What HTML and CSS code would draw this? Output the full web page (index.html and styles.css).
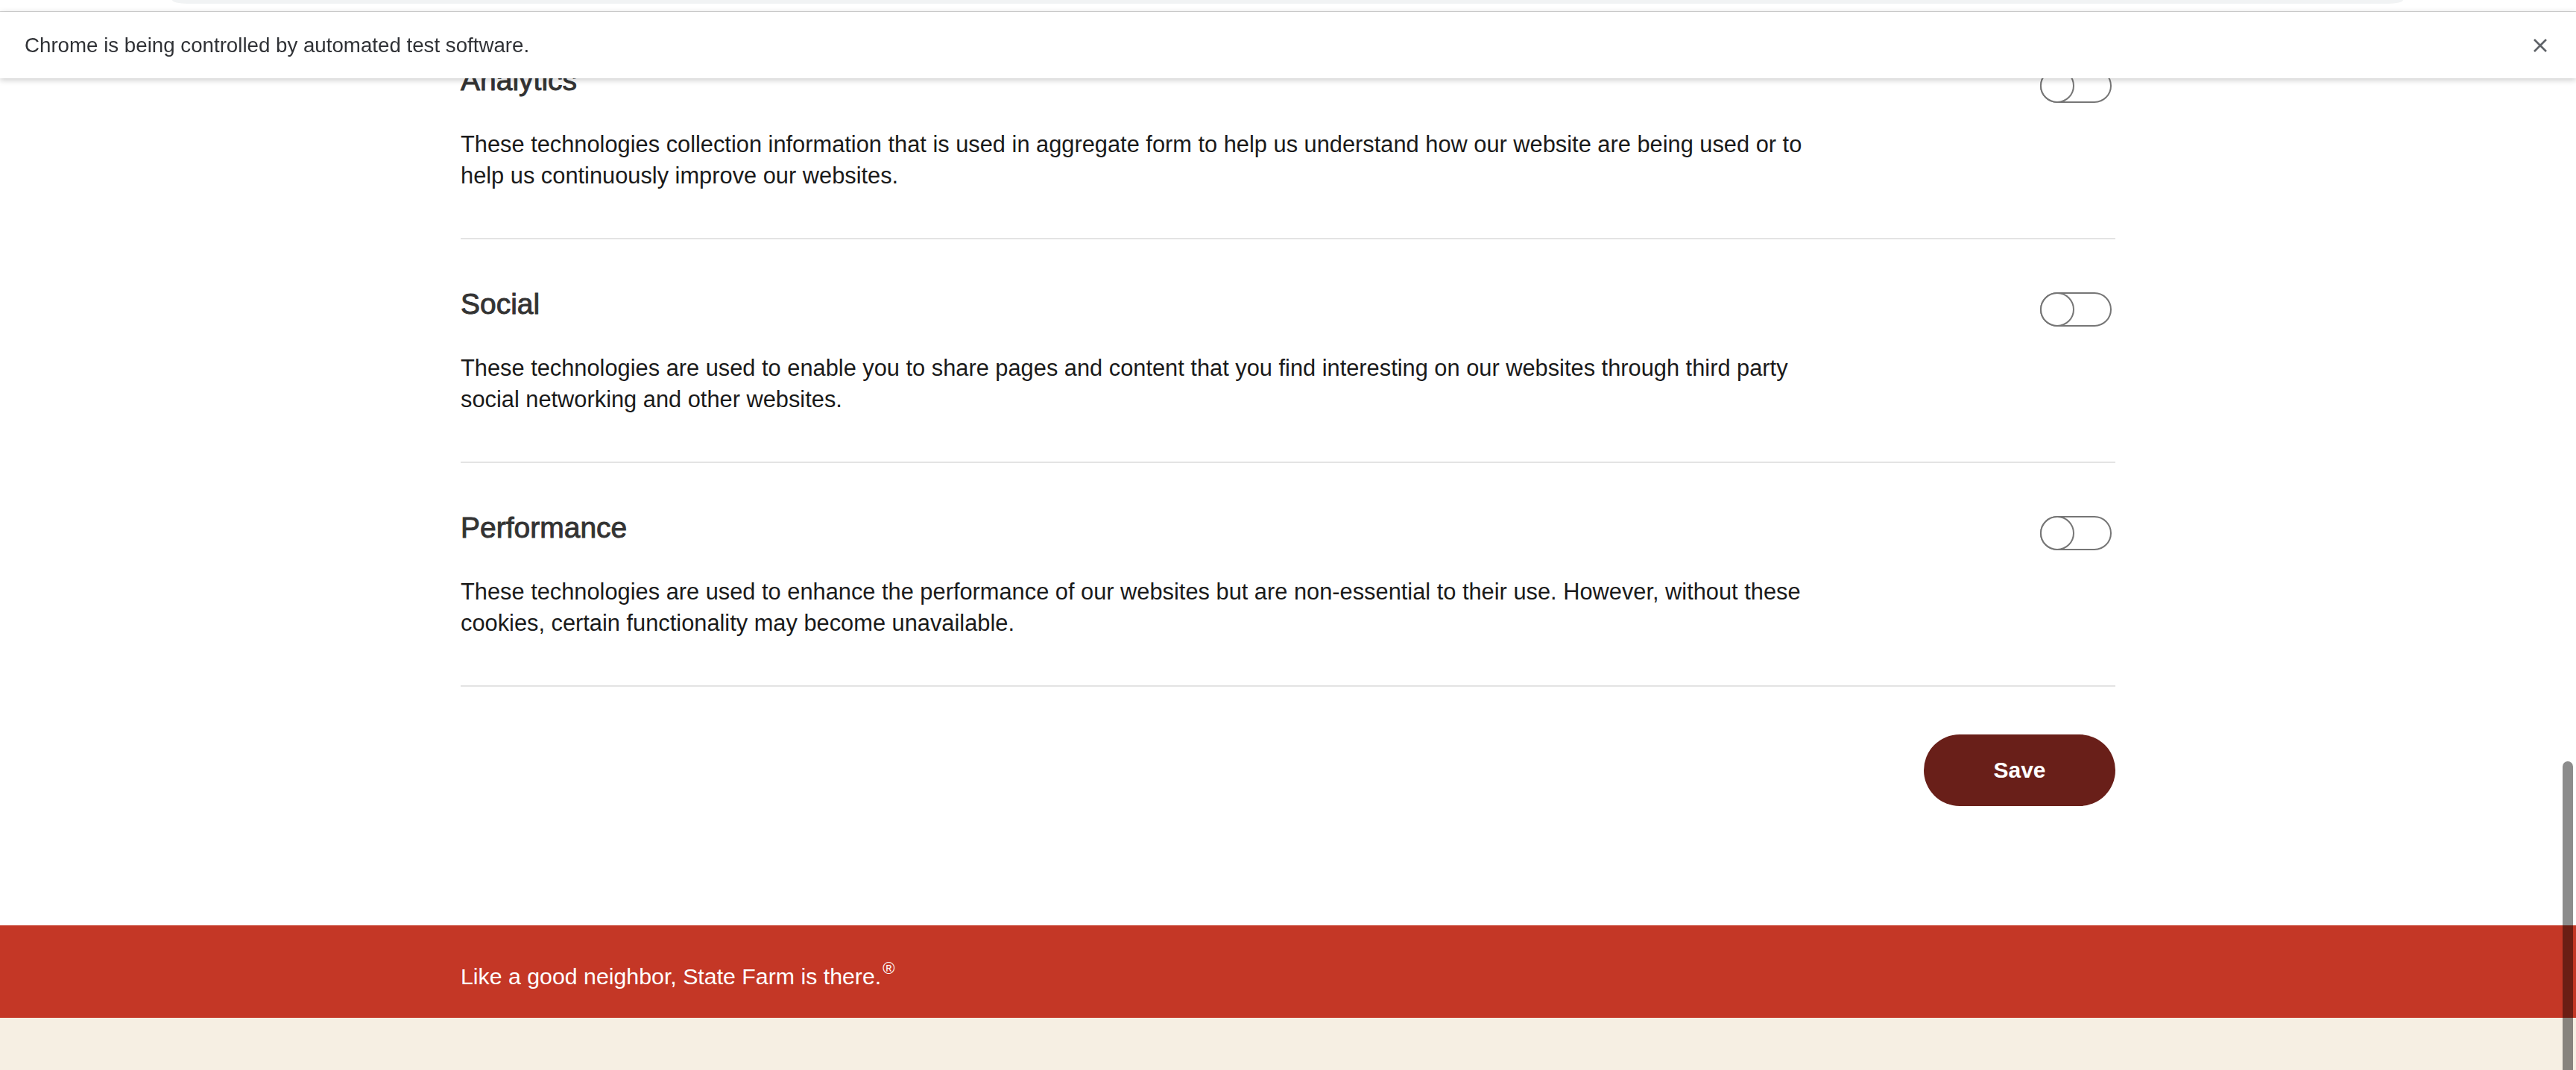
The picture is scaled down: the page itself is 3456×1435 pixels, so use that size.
FILE: index.html
```html
<!DOCTYPE html>
<html lang="en">
<head>
<meta charset="utf-8">
<title>Cookie preferences</title>
<link rel="stylesheet" href="styles.css">
</head>
<body>
<div class="chrome">
  <div class="toolbar"><div class="omnibox"></div></div>
  <div class="infobar">
    <span class="infobar-text">Chrome is being controlled by automated test software.</span>
    <span class="infobar-close" aria-label="Close">
      <svg width="20" height="20" viewBox="0 0 20 20"><path d="M2 2 L18 18 M18 2 L2 18" stroke="#5f6368" stroke-width="2.6" fill="none" stroke-linecap="butt"/></svg>
    </span>
  </div>
</div>

<main class="prefs">
  <section class="pref">
    <div class="pref-head">
      <h3 class="pref-title">Analytics</h3>
      <span class="toggle"><span class="knob"></span></span>
    </div>
    <p class="pref-text">These technologies collection information that is used in aggregate form to help us understand how our website are being used or to help us continuously improve our websites.</p>
  </section>
  <section class="pref">
    <div class="pref-head">
      <h3 class="pref-title">Social</h3>
      <span class="toggle"><span class="knob"></span></span>
    </div>
    <p class="pref-text">These technologies are used to enable you to share pages and content that you find interesting on our websites through third party social networking and other websites.</p>
  </section>
  <section class="pref">
    <div class="pref-head">
      <h3 class="pref-title">Performance</h3>
      <span class="toggle"><span class="knob"></span></span>
    </div>
    <p class="pref-text">These technologies are used to enhance the performance of our websites but are non-essential to their use. However, without these cookies, certain functionality may become unavailable.</p>
  </section>
  <div class="actions">
    <button class="save-btn" type="button">Save</button>
  </div>
</main>

<footer class="tagline-band">
  <div class="tagline-inner">Like a good neighbor, State Farm is there.<sup class="reg">®</sup></div>
</footer>
<div class="cream"></div>

<div class="scroll-thumb"></div>
</body>
</html>
```

FILE: styles.css
```css
html, body {
  margin: 0;
  padding: 0;
}
body {
  height: 1435px;
  overflow: hidden;
  background: #ffffff;
  font-family: "Liberation Sans", Arial, sans-serif;
}

/* Chrome UI overlay */
.chrome {
  position: fixed;
  top: 0;
  left: 0;
  right: 0;
  z-index: 10;
}
.toolbar {
  height: 15px;
  background: #ffffff;
  border-bottom: 1px solid #d6d6d6;
}
.omnibox {
  margin-left: 231px;
  width: 2993px;
  height: 5px;
  background: #f1f3f4;
  border-radius: 0 0 20px 20px / 0 0 5px 5px;
}
.infobar {
  height: 89px;
  background: #ffffff;
  display: flex;
  align-items: center;
  justify-content: space-between;
  padding: 0 38px 0 33px;
  box-shadow: 0 2px 8px rgba(0, 0, 0, 0.22);
}
.infobar-text {
  font-family: "Liberation Sans", Arial, sans-serif;
  font-size: 27.7px;
  color: #303236;
}
.infobar-close {
  display: flex;
  width: 20px;
  height: 20px;
}

/* Preferences */
.prefs {
  width: 2220px;
  margin: 0 auto;
  padding-top: 21px;
}
.pref {
  padding: 63px 0 62px;
  border-bottom: 2px solid #e3e3e3;
}
.pref-head {
  display: flex;
  justify-content: space-between;
  align-items: flex-start;
  height: 48px;
}
.pref-title {
  margin: 0;
  font-size: 39px;
  line-height: 48px;
  font-weight: 400;
  color: #333333;
  -webkit-text-stroke: 0.9px #333333;
}
.toggle {
  display: flex;
  box-sizing: border-box;
  width: 96px;
  height: 46px;
  margin: 8px 5px 0 0;
  border: 2px solid #767676;
  border-radius: 23px;
  background: #ffffff;
}
.knob {
  box-sizing: border-box;
  width: 46px;
  height: 46px;
  margin: -2px;
  border: 2px solid #767676;
  border-radius: 50%;
  background: #ffffff;
}
.pref-text {
  margin: 41px 0 0;
  max-width: 1830px;
  font-size: 30.8px;
  line-height: 42px;
  color: #1a1a1a;
}

.actions {
  display: flex;
  justify-content: flex-end;
  padding: 64px 0 160px;
}
.save-btn {
  width: 257px;
  height: 96px;
  border: none;
  border-radius: 48px;
  background: #691f19;
  color: #ffffff;
  font-family: "Liberation Sans", Arial, sans-serif;
  font-weight: 700;
  font-size: 30px;
  padding: 0;
}

/* Footer */
.tagline-band {
  height: 124px;
  box-sizing: border-box;
  background: #c43726;
  padding-top: 49px;
}
.tagline-inner {
  width: 2220px;
  margin: 0 auto;
  font-size: 30.3px;
  line-height: 40px;
  color: #ffffff;
}
.reg {
  font-size: 22px;
  vertical-align: 14px;
  line-height: 0;
  margin-left: 2px;
}
.cream {
  height: 70px;
  background: #f6efe3;
}

.scroll-thumb {
  position: fixed;
  right: 4px;
  top: 1021px;
  bottom: 0;
  width: 14px;
  border-radius: 7px 7px 0 0;
  background: rgba(0, 0, 0, 0.45);
  z-index: 20;
}
```
